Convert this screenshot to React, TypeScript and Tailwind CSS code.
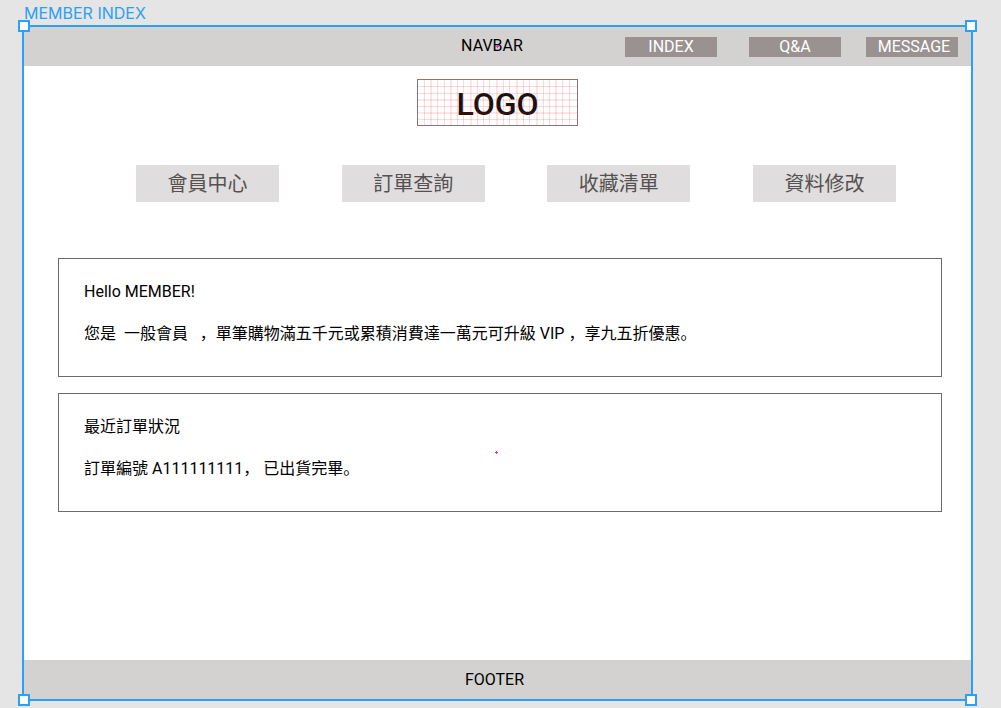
import React from "react";

const NAV = [
  { label: "INDEX", spacing: "mr-8" },
  { label: "Q&A", spacing: "mr-[25px]" },
  { label: "MESSAGE", spacing: "pl-1" },
];

const TABS = ["會員中心", "訂單查詢", "收藏清單", "資料修改"];

const HANDLES = [
  "-left-[6px] -top-[7px]",
  "-right-[6px] -top-[7px]",
  "-left-[6px] -bottom-[7px]",
  "-right-[6px] -bottom-[7px]",
];

// Grid lines as [position, thickness]
const COLS = [
  [6, 1], [12, 2], [19, 1], [26, 1], [32, 2], [39, 1], [45, 1], [52, 2], [59, 1], [65, 1], [71, 1], [78, 2],
  [85, 1], [91, 1], [98, 2], [105, 1], [111, 1], [118, 2], [125, 1], [131, 1], [137, 2], [144, 1], [151, 1],
];
const ROWS = [[6, 1], [13, 1], [19, 2], [26, 1], [32, 2], [39, 1]];

function Logo() {
  return (
    <div className="relative flex h-[47px] w-[161px] items-center justify-center border border-[#8a7575] pt-[3px]">
      <h1 className="text-[32px] leading-none font-medium text-[#161212]">LOGO</h1>
      <svg className="absolute inset-0 size-full" viewBox="0 0 159 45" preserveAspectRatio="none" aria-hidden="true">
        {COLS.map(([x, size]) => (
          <rect key={x} x={x} y="0" width={size} height="45" fill="#ff0000" fillOpacity={size === 2 ? 0.1 : 0.15} />
        ))}
        {ROWS.map(([y, size]) => (
          <rect key={y} x="0" y={y} width="159" height={size} fill="#ff0000" fillOpacity={size === 2 ? 0.1 : 0.15} />
        ))}
      </svg>
    </div>
  );
}

function Dot({ className }: { className: string }) {
  return (
    <svg className={"absolute size-[3px] " + className} viewBox="0 0 3 3" aria-hidden="true">
      <path d="M1 0h1v1h1v1H2v1H1V2H0V1h1z" fill="#ff24bd" />
    </svg>
  );
}

function Card({ title, children }: { title: string; children: React.ReactNode }) {
  return (
    <section className="h-[119px] border border-[#6b6b6b] px-[25px] pt-[22px] leading-[21px]">
      <h2>{title}</h2>
      <p className="mt-[21px] whitespace-pre-wrap">{children}</p>
    </section>
  );
}

export default function App() {
  return (
    <div className="flex min-h-screen flex-col bg-[#e5e5e5] pr-7 pb-[7px] pl-[22px] font-['Roboto','Noto_Sans_CJK_SC',sans-serif] text-base text-black">
      <div className="h-[25px] pt-[3px] pl-0.5 font-['Inter',sans-serif] leading-5 text-[#2ba0f5]">MEMBER INDEX</div>
      <div className="relative flex grow flex-col border-2 border-[#2ba0f5] bg-white">
        <header className="grid h-[39px] grid-cols-[1fr_auto_1fr] items-center bg-[#d3d2d0] pr-[13px]">
          <span className="col-start-2 pb-px pl-0.5">NAVBAR</span>
          <nav className="flex justify-end">
            {NAV.map(({ label, spacing }) => (
              <button
                key={label}
                type="button"
                className={"h-5 w-[92px] bg-[#999291] text-center leading-5 text-white " + spacing}
              >
                {label}
              </button>
            ))}
          </nav>
        </header>

        <main className="flex grow flex-col">
          <div className="mt-[13px] flex justify-center">
            <Logo />
          </div>
          <div className="mt-[39px] flex justify-between pr-[75px] pl-28">
            {TABS.map((tab) => (
              <button key={tab} type="button" className="h-[37px] w-[143px] bg-[#dfdddd] text-xl leading-none text-[#565151]">
                {tab}
              </button>
            ))}
          </div>
          <div className="mt-14 flex flex-col gap-4 pr-[29px] pl-[34px]">
            <Card title="Hello MEMBER!">
              {"您是  一般會員   ，單筆購物滿五千元或累積消費達一萬元可升級 VIP ，享九五折優惠。"}
            </Card>
            <Card title="最近訂單狀況">{"訂單編號 A111111111， 已出貨完畢。"}</Card>
          </div>
        </main>

        <footer className="flex h-[39px] items-center justify-center bg-[#d3d2d0] pr-1.5">FOOTER</footer>

        <Dot className="top-[18px] left-[calc(50%_-_2px)]" />
        <Dot className="top-[424px] left-[calc(50%_-_3px)]" />
        {HANDLES.map((place) => (
          <span key={place} className={"absolute size-3 border-2 border-[#2ba0f5] bg-white " + place} />
        ))}
      </div>
    </div>
  );
}
